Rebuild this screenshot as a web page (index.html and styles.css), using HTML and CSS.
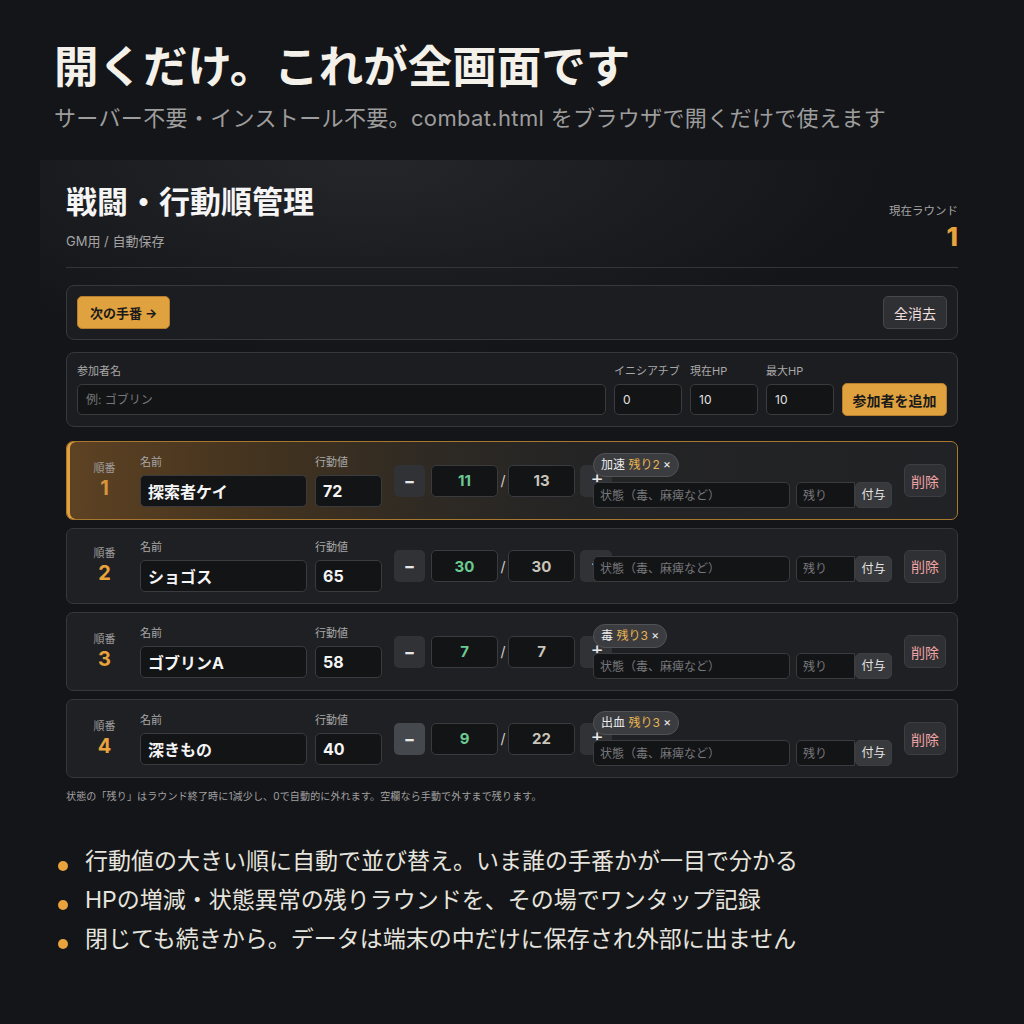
FILE: index.html
```html
<!DOCTYPE html>
<html lang="ja">
<head>
    <meta charset="UTF-8">
    <meta name="viewport" content="width=device-width, initial-scale=1.0">
    <title>戦闘・行動順管理</title>
    <link rel="stylesheet" href="styles.css">
</head>
<body>
    <header class="hero">
        <h1>開くだけ。これが全画面です</h1>
        <p class="lead">サーバー不要・インストール不要。combat.html をブラウザで開くだけで使えます</p>
    </header>

    <main class="app">
        <div class="app-head">
            <div>
                <h2>戦闘・行動順管理</h2>
                <p class="sub">GM用 / 自動保存</p>
            </div>
            <div class="round">
                <span>現在ラウンド</span>
                <strong>1</strong>
            </div>
        </div>

        <div class="box toolbar">
            <button class="btn-main" type="button">次の手番 →</button>
            <button class="btn-sub" type="button">全消去</button>
        </div>

        <form class="box add-form">
            <label class="fld fld-name">参加者名<input type="text" placeholder="例: ゴブリン"></label>
            <label class="fld">イニシアチブ<input type="text" value="0"></label>
            <label class="fld">現在HP<input type="text" value="10"></label>
            <label class="fld">最大HP<input type="text" value="10"></label>
            <button class="btn-main btn-add" type="button">参加者を追加</button>
        </form>

        <ul class="list">
            <li class="row active">
                <div class="order"><span>順番</span><b>1</b></div>
                <label class="fld col-name">名前<input type="text" value="探索者ケイ"></label>
                <label class="fld col-init">行動値<input type="text" value="72"></label>
                <div class="hp">
                    <button type="button" class="step">−</button>
                    <input class="hp-cur" type="text" value="11">
                    <span class="slash">/</span>
                    <input class="hp-max" type="text" value="13">
                    <button type="button" class="step plus">+</button>
                </div>
                <div class="status">
                    <div class="tags"><span class="tag">加速 <em>残り2</em> ×</span></div>
                    <div class="status-in">
                        <input class="st-name" type="text" placeholder="状態（毒、麻痺など）">
                        <div class="st-left"><input type="text" placeholder="残り"><button type="button">付与</button></div>
                    </div>
                </div>
                <button type="button" class="del">削除</button>
            </li>
            <li class="row">
                <div class="order"><span>順番</span><b>2</b></div>
                <label class="fld col-name">名前<input type="text" value="ショゴス"></label>
                <label class="fld col-init">行動値<input type="text" value="65"></label>
                <div class="hp">
                    <button type="button" class="step">−</button>
                    <input class="hp-cur" type="text" value="30">
                    <span class="slash">/</span>
                    <input class="hp-max" type="text" value="30">
                    <button type="button" class="step plus">+</button>
                </div>
                <div class="status">
                    <div class="tags"></div>
                    <div class="status-in">
                        <input class="st-name" type="text" placeholder="状態（毒、麻痺など）">
                        <div class="st-left"><input type="text" placeholder="残り"><button type="button">付与</button></div>
                    </div>
                </div>
                <button type="button" class="del">削除</button>
            </li>
            <li class="row">
                <div class="order"><span>順番</span><b>3</b></div>
                <label class="fld col-name">名前<input type="text" value="ゴブリンA"></label>
                <label class="fld col-init">行動値<input type="text" value="58"></label>
                <div class="hp">
                    <button type="button" class="step">−</button>
                    <input class="hp-cur" type="text" value="7">
                    <span class="slash">/</span>
                    <input class="hp-max" type="text" value="7">
                    <button type="button" class="step plus">+</button>
                </div>
                <div class="status">
                    <div class="tags"><span class="tag">毒 <em>残り3</em> ×</span></div>
                    <div class="status-in">
                        <input class="st-name" type="text" placeholder="状態（毒、麻痺など）">
                        <div class="st-left"><input type="text" placeholder="残り"><button type="button">付与</button></div>
                    </div>
                </div>
                <button type="button" class="del">削除</button>
            </li>
            <li class="row">
                <div class="order"><span>順番</span><b>4</b></div>
                <label class="fld col-name">名前<input type="text" value="深きもの"></label>
                <label class="fld col-init">行動値<input type="text" value="40"></label>
                <div class="hp">
                    <button type="button" class="step hover">−</button>
                    <input class="hp-cur" type="text" value="9">
                    <span class="slash">/</span>
                    <input class="hp-max" type="text" value="22">
                    <button type="button" class="step plus">+</button>
                </div>
                <div class="status">
                    <div class="tags"><span class="tag">出血 <em>残り3</em> ×</span></div>
                    <div class="status-in">
                        <input class="st-name" type="text" placeholder="状態（毒、麻痺など）">
                        <div class="st-left"><input type="text" placeholder="残り"><button type="button">付与</button></div>
                    </div>
                </div>
                <button type="button" class="del">削除</button>
            </li>
        </ul>

        <p class="note">状態の「残り」はラウンド終了時に1減少し、0で自動的に外れます。空欄なら手動で外すまで残ります。</p>
    </main>

    <ul class="points">
        <li>行動値の大きい順に自動で並び替え。いま誰の手番かが一目で分かる</li>
        <li>HPの増減・状態異常の残りラウンドを、その場でワンタップ記録</li>
        <li>閉じても続きから。データは端末の中だけに保存され外部に出ません</li>
    </ul>
</body>
</html>
```

FILE: styles.css
```css
* {
    box-sizing: border-box;
}

body {
    margin: 0;
    background-color: #141518;
    color: #e6e4de;
    font-family: "Inter", "Noto Sans CJK JP", sans-serif;
}

input,
button {
    font-family: inherit;
}

/* 上部の見出し */
.hero {
    padding: 40px 54px 0;
}

.hero h1 {
    margin: 0;
    font-size: 44.5px;
    line-height: 54px;
    font-weight: 700;
    color: #f3f1ea;
}

.hero .lead {
    margin: 9px 0 0;
    font-size: 22px;
    line-height: 30px;
    letter-spacing: 0.35px;
    color: #9d9d9d;
}

/* アプリ画面 */
.app {
    margin: 27px 40px 0;
    padding: 22px 26px 20px;
    background: radial-gradient(ellipse 55% 30% at 35% 0%, #252629 0%, rgba(20, 21, 24, 0) 100%);
}

.app-head {
    display: flex;
    justify-content: space-between;
    padding-bottom: 16px;
    border-bottom: 1px solid #333539;
}

.app-head h2 {
    margin: 0;
    font-size: 31px;
    line-height: 40px;
    font-weight: 700;
    color: #f5f5f5;
}

.app-head .sub {
    margin: 10px 0 0;
    font-size: 13px;
    line-height: 18px;
    color: #a3a3a3;
}

.round {
    display: flex;
    flex-direction: column;
    align-items: flex-end;
    margin-top: 21px;
}

.round span {
    font-size: 11.5px;
    line-height: 16px;
    color: #a3a3a3;
}

.round strong {
    margin-top: 4px;
    font-size: 26px;
    line-height: 28px;
    font-weight: 800;
    color: #e8a33d;
}

.box {
    border: 1px solid #36383c;
    border-radius: 8px;
    background-color: #1c1d20;
    padding: 10px;
}

.toolbar {
    display: flex;
    justify-content: space-between;
    margin-top: 17px;
}

.btn-main {
    height: 33px;
    padding: 0 12px;
    border: 1px solid #b57d2c;
    border-radius: 5px;
    background-color: #e0a23f;
    color: #1a1a1a;
    font-size: 13px;
    font-weight: 700;
    white-space: nowrap;
    cursor: pointer;
}

.btn-sub {
    height: 33px;
    padding: 0 10px;
    border: 1px solid #45474b;
    border-radius: 5px;
    background-color: #2e3033;
    color: #f0dede;
    font-size: 14px;
    cursor: pointer;
}

/* 参加者追加フォーム */
.add-form {
    display: flex;
    align-items: flex-end;
    gap: 8px;
    margin: 12px 0 0;
    padding-bottom: 11px;
}

.fld {
    display: flex;
    flex-direction: column;
    gap: 5px;
    width: 68px;
    font-size: 11px;
    line-height: 16px;
    color: #a8a8a8;
}

.fld input {
    width: 100%;
    height: 31px;
    padding: 0 8px;
    border: 1px solid #393b3f;
    border-radius: 5px;
    background-color: #131416;
    color: #e2e2e2;
    font-size: 12px;
}

.fld input::placeholder,
.status input::placeholder {
    color: #76777a;
}

.add-form .fld-name {
    flex: 1;
}

.btn-add {
    width: 105px;
    margin-bottom: -1px;
    padding: 0;
    font-size: 14px;
}

/* 参加者リスト */
.list {
    display: flex;
    flex-direction: column;
    gap: 8px;
    margin: 14px 0 0;
    padding: 0;
    list-style: none;
}

.row {
    display: flex;
    align-items: center;
    gap: 8px;
    padding: 11px 11px 11px 10px;
    border: 1px solid #35373b;
    border-radius: 7px;
    background-color: #1f2023;
}

.row.active {
    border-color: #a9782f;
    background: linear-gradient(90deg, #5e4223 0%, #45341f 20%, #2f2a23 40%, #242425 58%, #212225 100%);
    box-shadow: inset 3px 0 0 #e0a23f;
}

.order {
    display: flex;
    flex-direction: column;
    align-items: center;
    width: 55px;
}

.order span {
    font-size: 11px;
    line-height: 14px;
    color: #9c9c9c;
}

.order b {
    font-size: 20px;
    line-height: 26px;
    color: #e8a33d;
}

.row.active .order b {
    color: #d4953d;
}

.row .fld {
    gap: 6px;
    line-height: 14px;
}

.row .fld input {
    height: 32px;
    padding: 0 7px;
    color: #f5f5f5;
    font-size: 16px;
    font-weight: 700;
}

.col-name {
    width: 167px;
}

.col-init {
    width: 67px;
}

/* HPは枠より広く、＋ボタンが状態欄の下に潜る */
.hp {
    display: flex;
    align-items: center;
    flex-shrink: 0;
    width: 191px;
    margin-left: 4px;
}

.hp > * {
    flex-shrink: 0;
}

.step {
    width: 31px;
    height: 32px;
    padding: 0;
    border: none;
    border-radius: 5px;
    background-color: #303236;
    color: #e8e8e8;
    font-size: 17px;
    font-weight: 700;
    cursor: pointer;
}

.step.hover {
    background-color: #45484c;
}

.hp .plus {
    width: 32px;
    margin-left: 5px;
    padding: 0 0 6px 2px;
    font-size: 20px;
    font-weight: 400;
    line-height: 1;
}

.hp input {
    width: 67px;
    height: 32px;
    border: 1px solid #393b3f;
    border-radius: 5px;
    background-color: #131416;
    text-align: center;
    font-size: 15px;
    font-weight: 700;
}

.hp .hp-cur {
    margin-left: 6px;
    color: #6ccb92;
}

.hp .hp-max {
    color: #c9c5bb;
}

.slash {
    width: 10px;
    text-align: center;
    font-size: 14px;
    color: #d0d0d0;
}

.status {
    width: 299px;
    flex-shrink: 0;
}

.tags {
    display: flex;
    margin-bottom: 5px;
}

.tag {
    height: 24px;
    padding: 0 7px;
    border: 1px solid #505256;
    border-radius: 12px;
    background-color: #3a3c3f;
    color: #ececec;
    font-size: 12px;
    line-height: 22px;
}

.tag em {
    font-style: normal;
    color: #e8b352;
}

.status-in {
    display: flex;
    gap: 6px;
}

.status input {
    height: 26px;
    margin: 0;
    padding: 0 6px;
    border: 1px solid #393b3f;
    border-radius: 5px;
    background-color: #131416;
    color: #e2e2e2;
    font-size: 12px;
}

.st-name {
    flex: 1;
    min-width: 0;
}

.st-left {
    display: flex;
    align-items: stretch;
    width: 96px;
}

.st-left input {
    width: 59px;
    border-radius: 5px 0 0 5px;
}

.st-left button {
    width: 37px;
    height: 26px;
    margin: 0;
    padding: 0;
    border: 1px solid #3c3e42;
    border-radius: 5px;
    background-color: #37393c;
    color: #e4e4e4;
    font-size: 12px;
    line-height: 24px;
}

.del {
    width: 42px;
    height: 33px;
    margin-left: 4px;
    padding: 0;
    border: 1px solid #3c3e42;
    border-radius: 6px;
    background-color: #2e3033;
    color: #efa3a3;
    font-size: 14px;
    cursor: pointer;
}

.note {
    margin: 11px 0 0;
    font-size: 10px;
    line-height: 14px;
    letter-spacing: 0.15px;
    color: #a0a0a0;
}

/* 特長 */
.points {
    margin: 19px 0 0;
    padding: 0;
    list-style: none;
}

.points li {
    display: flex;
    align-items: center;
    gap: 17px;
    padding-left: 58px;
    font-size: 23px;
    line-height: 39px;
    color: #e6e4de;
}

.points li::before {
    content: "";
    flex-shrink: 0;
    width: 10px;
    height: 10px;
    margin-top: 8px;
    border-radius: 50%;
    background-color: #e8a33d;
}
```
